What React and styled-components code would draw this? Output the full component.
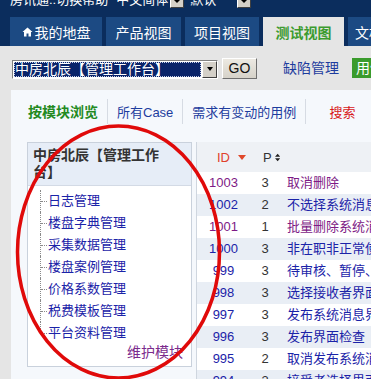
import React from 'react';
import styled, { createGlobalStyle } from 'styled-components';

const GlobalStyle = createGlobalStyle`
  html, body { margin: 0; padding: 0; background: #e5e5e5; overflow: hidden; }
  body { font-family: "Liberation Sans", "Noto Sans CJK SC", sans-serif; font-size: 13px; }
  * { box-sizing: border-box; }
`;

const Page = styled.div`
  position: relative;
  width: 371px;
  height: 379px;
  overflow: hidden;
  background: #e5e5e5;
  display: flex;
  flex-direction: column;
`;

/* ---------- header ---------- */
const Header = styled.header`
  flex: none;
  background: #0b2d5d;
  height: 46px;
  display: flex;
  flex-direction: column;
  overflow: hidden;
`;

const TopRow = styled.div`
  height: 17px;
  overflow: hidden;
`;

const TopInner = styled.div`
  margin-top: -12px;
  height: 20px;
  display: flex;
  align-items: center;
  padding-left: 10px;
  color: #fff;
  font-size: 13px;
  white-space: nowrap;
`;

const TopText = styled.span`
  flex: none;
  margin-right: ${p => p.$mr || 0}px;
`;

const MiniSelect = styled.span`
  flex: none;
  width: 14px;
  height: 18px;
  margin-top: 2px;
  margin-right: ${p => p.$mr || 0}px;
  background: #d4d0c8;
  border: 1px solid;
  border-color: #fff #404040 #404040 #fff;
  display: flex;
  align-items: flex-end;
  padding-bottom: 4px;
  justify-content: center;
  &::after {
    content: '';
    border-left: 3px solid transparent;
    border-right: 3px solid transparent;
    border-top: 3px solid #000;
  }
`;

const TabBar = styled.nav`
  height: 29px;
  display: flex;
  gap: 4px;
  padding-left: 10px;
  white-space: nowrap;
`;

const Tab = styled.div`
  flex: none;
  width: ${p => p.$w}px;
  display: flex;
  align-items: center;
  justify-content: center;
  gap: 2px;
  background: ${p => (p.$active ? '#e5e5e5' : '#1c4a83')};
  color: ${p => (p.$active ? '#3b9b2f' : '#ffffff')};
  font-weight: ${p => (p.$active ? 700 : 400)};
  font-size: 14px;
  overflow: hidden;
`;

/* ---------- toolbar ---------- */
const Toolbar = styled.div`
  flex: none;
  height: 44px;
  display: flex;
  align-items: center;
  padding-left: 12px;
  white-space: nowrap;
  overflow: hidden;
`;

const SelectBox = styled.div`
  flex: none;
  width: 206px;
  height: 19px;
  display: flex;
  border: 1px solid;
  border-color: #808080 #fff #fff #808080;
  background: #fff;
  margin-top: 2px;
`;

const SelectValue = styled.div`
  flex: 1;
  margin: 1px;
  background: #0a246a;
  color: #fff;
  font-size: 14px;
  line-height: 14px;
  padding-left: 1px;
  outline: 1px dotted #c8d0e8;
  outline-offset: -1px;
  display: flex;
  align-items: center;
  overflow: hidden;
`;

const SelectArrow = styled.div`
  flex: none;
  width: 15px;
  background: #d4d0c8;
  border: 1px solid;
  border-color: #fff #404040 #404040 #fff;
  display: flex;
  align-items: center;
  justify-content: center;
  &::after {
    content: '';
    border-left: 3.5px solid transparent;
    border-right: 3.5px solid transparent;
    border-top: 4px solid #000;
  }
`;

const GoButton = styled.button`
  flex: none;
  margin-left: 4px;
  width: 35px;
  height: 21px;
  padding: 0;
  background: linear-gradient(#ece9e2, #d6d2c9);
  border: 1px solid;
  border-color: #fff #6f6f6f #6f6f6f #fff;
  font-family: "Liberation Sans", sans-serif;
  font-size: 14px;
  color: #111;
`;

const ToolLink = styled.span`
  flex: none;
  margin-left: 26px;
  color: #1d3c9e;
  font-size: 14px;
  margin-top: -2px;
`;

const GreenTag = styled.span`
  flex: none;
  margin-left: 13px;
  height: 20px;
  padding: 0 4px;
  background: #3a9b2c;
  color: #fff;
  font-size: 14px;
  line-height: 20px;
`;

/* ---------- content panel ---------- */
const Panel = styled.main`
  flex: 1;
  margin-left: 11px;
  background: #f5f8fc;
  display: flex;
  flex-direction: column;
  min-height: 0;
`;

const LinkBar = styled.div`
  flex: none;
  height: 42px;
  display: flex;
  align-items: center;
  padding-left: 8px;
  white-space: nowrap;
`;

const NavLink = styled.span`
  flex: none;
  padding: 0 9px;
  margin-left: ${p => p.$ml || 0}px;
  font-size: ${p => (p.$bold ? 14 : 13)}px;
  font-weight: ${p => (p.$bold ? 700 : 400)};
  color: ${p => p.$color};
`;

const Sep = styled.span`
  flex: none;
  width: 1px;
  height: 25px;
  background: #d6dbe3;
`;

const Body = styled.div`
  flex: 1;
  display: flex;
  align-items: flex-start;
  gap: 4px;
  padding: 10px 0 0 16px;
  min-height: 0;
`;

/* ---------- module box ---------- */
const ModuleBox = styled.section`
  flex: none;
  width: 165px;
  border: 1px solid #c9d1dc;
  background: #fff;
  padding-bottom: 3px;
`;

const ModuleHeader = styled.div`
  background: #e6edf7;
  border-bottom: 1px solid #d3dae5;
  padding: 4px 28px 4px 5px;
  font-size: 14px;
  font-weight: 700;
  line-height: 17px;
  color: #333;
`;

const TreeList = styled.ul`
  list-style: none;
  margin: 0;
  padding: 4px 0 0 12px;
`;

const TreeItem = styled.li`
  position: relative;
  height: 22px;
  line-height: 22px;
  padding-left: 8px;
  color: #1b23a8;
  font-size: 13px;
  white-space: nowrap;
  &::before {
    content: '';
    position: absolute;
    left: 0;
    top: 0;
    bottom: ${p => (p.$last ? '11px' : '0')};
    border-left: 1px dotted #8a8a8a;
  }
  &::after {
    content: '';
    position: absolute;
    left: 1px;
    top: 11px;
    width: 6px;
    border-top: 1px dotted #8a8a8a;
  }
`;

const MaintainLink = styled.div`
  margin-top: -3px;
  text-align: right;
  padding-right: 8px;
  line-height: 22px;
  font-size: 14px;
  color: #7b2a8c;
`;

/* ---------- case table ---------- */
const CaseTable = styled.section`
  flex: 1;
  min-width: 0;
  align-self: stretch;
  border-left: 1px solid #cfd6df;
  background: #fff;
  overflow: hidden;
`;

const HeadRow = styled.div`
  display: grid;
  grid-template-columns: 53px 30px 1fr;
  height: 30px;
  background: #eef1f5;
  align-items: center;
  font-size: 13px;
`;

const HeadCell = styled.div`
  display: flex;
  align-items: center;
  padding-left: ${p => p.$pl || 0}px;
  gap: ${p => p.$gap || 0}px;
  color: ${p => p.$color || '#333'};
`;

const CaseRow = styled.div`
  display: grid;
  grid-template-columns: 53px 30px 1fr;
  height: 22px;
  line-height: 22px;
  background: ${p => (p.$alt ? '#e9eef5' : '#ffffff')};
  font-size: 13px;
  white-space: nowrap;
`;

const IdCell = styled.div`
  text-align: center;
  color: ${p => (p.$visited ? '#7e1a86' : '#1b23a8')};
`;

const PCell = styled.div`
  text-align: center;
  color: #333;
`;

const TitleCell = styled.div`
  padding-left: 7px;
  overflow: hidden;
  color: ${p => (p.$visited ? '#7e1a86' : '#1b23a8')};
`;

const Overlay = styled.svg`
  position: absolute;
  left: 0;
  top: 0;
  pointer-events: none;
`;

const HouseIcon = () => (
  <svg width="11" height="10" viewBox="0 0 11 10">
    <path d="M5.5 0.5 L10.5 5 L9 5 L9 9.5 L6.5 9.5 L6.5 6.5 L4.5 6.5 L4.5 9.5 L2 9.5 L2 5 L0.5 5 Z" fill="#fff" />
  </svg>
);

const SortDown = () => (
  <svg width="8" height="5" viewBox="0 0 8 5">
    <path d="M0 0 L8 0 L4 5 Z" fill="#e0482a" />
  </svg>
);

const SortBoth = () => (
  <svg width="8" height="11" viewBox="0 0 8 11">
    <path d="M4 0 L8 4.5 L0 4.5 Z M0 6.5 L8 6.5 L4 11 Z" fill="#222" />
  </svg>
);

const tabs = [
  { label: '我的地盘', w: 92, home: true },
  { label: '产品视图', w: 75 },
  { label: '项目视图', w: 74 },
  { label: '测试视图', w: 81, active: true },
  { label: '文档视图', w: 70 },
];

const modules = ['日志管理', '楼盘字典管理', '采集数据管理', '楼盘案例管理', '价格系数管理', '税费模板管理', '平台资料管理'];

const cases = [
  { id: 1003, p: 3, t: '取消删除', v: true },
  { id: 1002, p: 2, t: '不选择系统消息接收者' },
  { id: 1001, p: 1, t: '批量删除系统消息', v: true },
  { id: 1000, p: 3, t: '非在职非正常使用人员' },
  { id: 999, p: 3, t: '待审核、暂停、删除' },
  { id: 998, p: 3, t: '选择接收者界面检查' },
  { id: 997, p: 3, t: '发布系统消息界面' },
  { id: 996, p: 3, t: '发布界面检查' },
  { id: 995, p: 2, t: '取消发布系统消息' },
  { id: 994, p: 3, t: '接受者选择界面检查' },
];

export default function App() {
  return (
    <Page>
      <GlobalStyle />
      <Header>
        <TopRow>
          <TopInner>
            <TopText $mr={8}>房讯通::切换帮助</TopText>
            <TopText $mr={2}>中文简体</TopText>
            <MiniSelect $mr={6} />
            <TopText $mr={21}>默认</TopText>
            <MiniSelect />
          </TopInner>
        </TopRow>
        <TabBar>
          {tabs.map(t => (
            <Tab key={t.label} $w={t.w} $active={t.active}>
              {t.home && <HouseIcon />}
              {t.label}
            </Tab>
          ))}
        </TabBar>
      </Header>

      <Toolbar>
        <SelectBox>
          <SelectValue>中房北辰【管理工作台】</SelectValue>
          <SelectArrow />
        </SelectBox>
        <GoButton>GO</GoButton>
        <ToolLink>缺陷管理</ToolLink>
        <GreenTag>用例库</GreenTag>
      </Toolbar>

      <Panel>
        <LinkBar>
          <NavLink $bold $color="#238a1f">按模块浏览</NavLink>
          <Sep />
          <NavLink $color="#1d3c9e">所有Case</NavLink>
          <Sep />
          <NavLink $color="#1d3c9e">需求有变动的用例</NavLink>
          <Sep />
          <NavLink $ml={14} $color="#d8191b">搜索</NavLink>
        </LinkBar>

        <Body>
          <ModuleBox>
            <ModuleHeader>中房北辰【管理工作台】</ModuleHeader>
            <TreeList>
              {modules.map((m, i) => (
                <TreeItem key={m} $last={i === modules.length - 1}>{m}</TreeItem>
              ))}
            </TreeList>
            <MaintainLink>维护模块</MaintainLink>
          </ModuleBox>

          <CaseTable>
            <HeadRow>
              <HeadCell $pl={20} $gap={8} $color="#e0402a">ID<SortDown /></HeadCell>
              <HeadCell $pl={13} $gap={3}>P<SortBoth /></HeadCell>
              <HeadCell />
            </HeadRow>
            {cases.map((c, i) => (
              <CaseRow key={c.id} $alt={i % 2 === 1}>
                <IdCell $visited={c.v}>{c.id}</IdCell>
                <PCell>{c.p}</PCell>
                <TitleCell $visited={c.v}>{c.t}</TitleCell>
              </CaseRow>
            ))}
          </CaseTable>
        </Body>
      </Panel>

      <Overlay width="371" height="379" viewBox="0 0 371 379">
        <ellipse cx="118.5" cy="252" rx="101" ry="126" fill="none" stroke="#e00a0a" strokeWidth="3.5" />
      </Overlay>
    </Page>
  );
}
